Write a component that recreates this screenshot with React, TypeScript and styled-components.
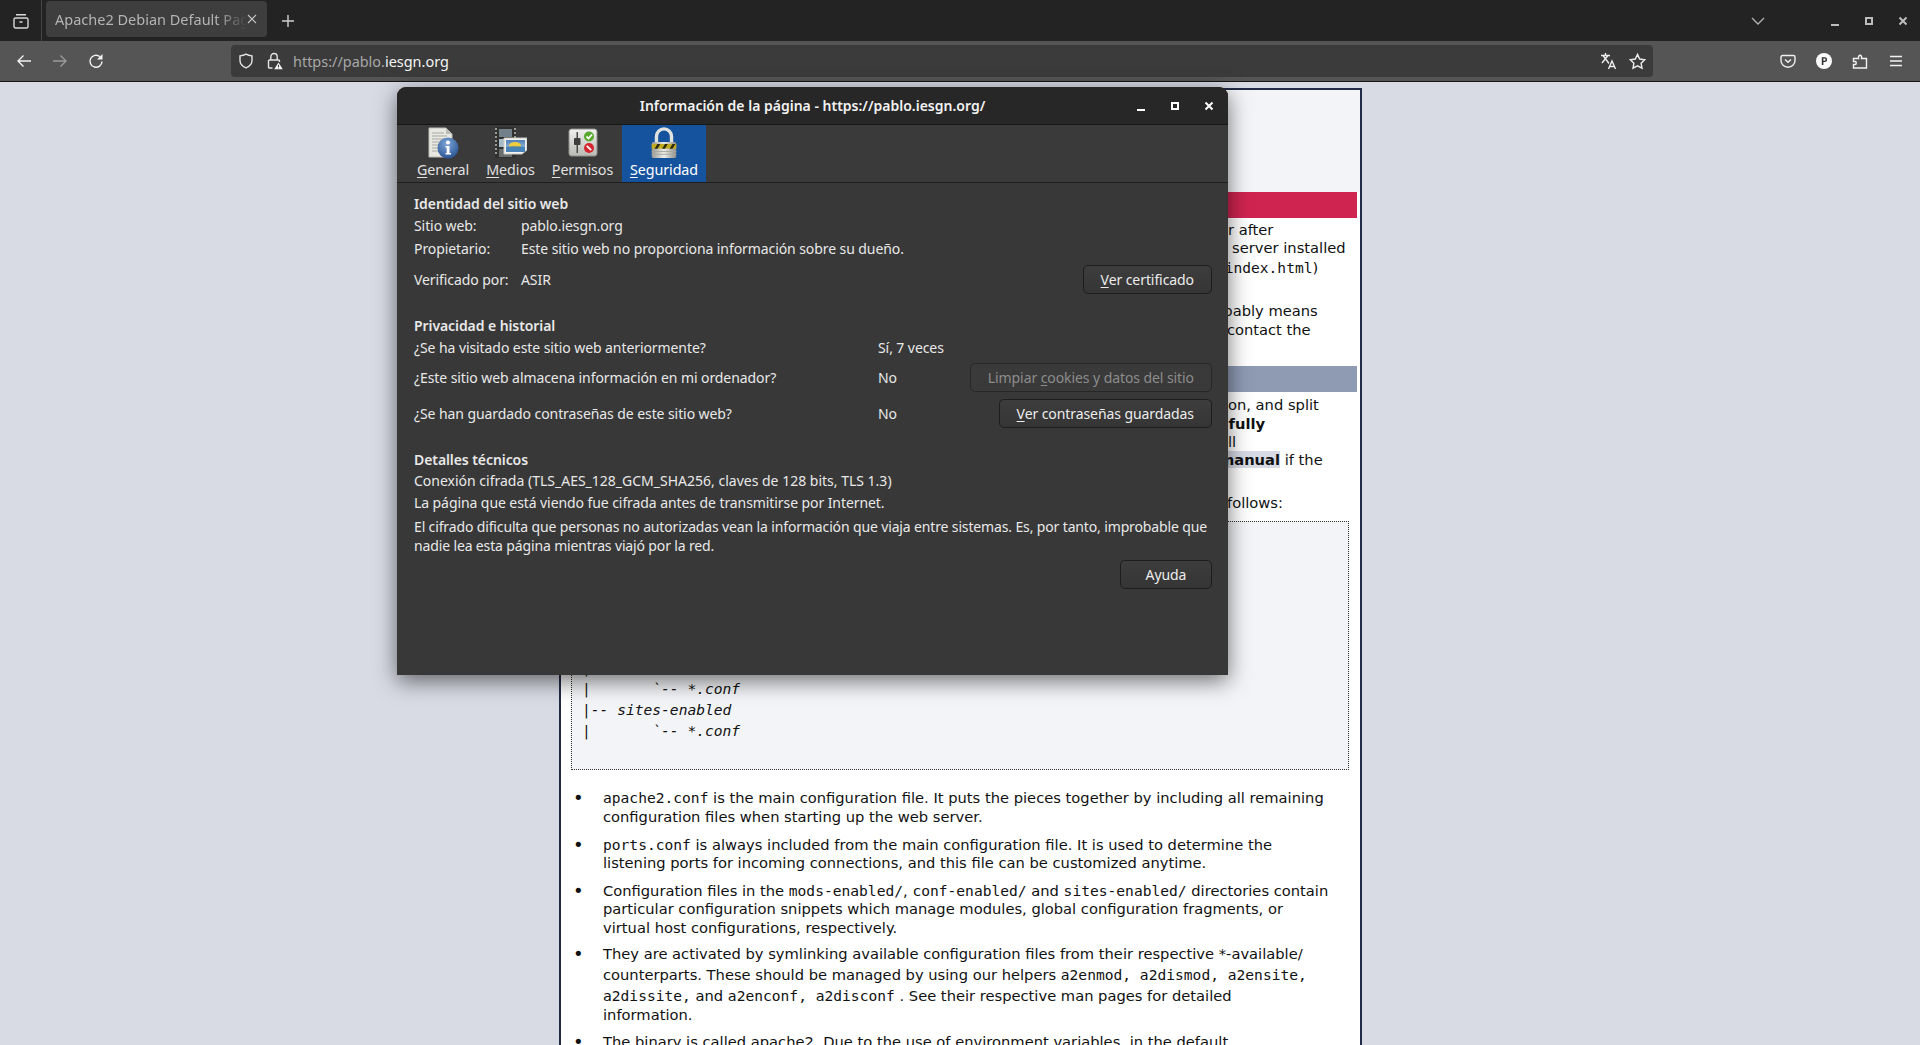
import React from 'react';
import styled, { createGlobalStyle } from 'styled-components';

const GlobalStyle = createGlobalStyle`
  html, body {
    margin: 0;
    height: 1045px;
    overflow: hidden;
    background: #d8dbe4;
  }
  * { box-sizing: border-box; }
`;

const uiFont = `"Noto Sans", "Open Sans", sans-serif`;

/* ---------- browser chrome ---------- */

const Screen = styled.div`
  position: relative;
  width: 1920px;
  height: 1045px;
  overflow: hidden;
  font-family: ${uiFont};
`;

const TabBar = styled.div`
  display: flex;
  align-items: center;
  height: 41px;
  background: #232323;
  color: #d6d6d6;
`;

const SidebarButton = styled.div`
  display: flex;
  align-items: center;
  justify-content: center;
  width: 42px;
  height: 41px;
  border-right: 1px solid #444;
`;

const Tab = styled.div`
  display: flex;
  align-items: center;
  width: 221px;
  height: 36px;
  margin: 0 0 4px 4px;
  padding: 0 10px 0 9px;
  background: #3e3e3e;
  border-radius: 4px;
  font-size: 14.5px;
  color: #b4b4b4;
`;

const TabTitle = styled.span`
  flex: 1;
  overflow: hidden;
  white-space: nowrap;
  -webkit-mask-image: linear-gradient(to right, #000 84%, transparent 100%);
  mask-image: linear-gradient(to right, #000 84%, transparent 100%);
`;

const TabIconSlot = styled.div<{ $w: number }>`
  display: flex;
  align-items: center;
  justify-content: center;
  width: ${(p) => p.$w}px;
`;

const Spacer = styled.div`
  flex: 1;
`;

const WindowControls = styled.div`
  display: flex;
  align-items: center;
  gap: 24px;
  padding-right: 12px;
`;

const NavBar = styled.div`
  display: flex;
  align-items: center;
  height: 41px;
  padding-left: 6px;
  background: #555;
  border-bottom: 1px solid #141414;
`;

const NavButton = styled.div<{ $w?: number }>`
  display: flex;
  align-items: center;
  justify-content: center;
  width: ${(p) => p.$w ?? 36}px;
  height: 32px;
`;

const UrlBar = styled.div`
  display: flex;
  align-items: center;
  width: 1422px;
  height: 32px;
  margin-left: 117px;
  padding: 0 2px 0 7px;
  background: #3b3b3b;
  border-radius: 4px;
  font-size: 14.45px;
  color: #a8a8a8;
`;

const UrlHost = styled.span`
  color: #f4f4f4;
`;

const LockSlot = styled(NavButton)`
  margin-left: 9px;
`;

const UrlText = styled.div`
  flex: 1;
  margin-left: 6px;
`;

const Toolbar = styled.div`
  display: flex;
  margin-left: 117px;
`;

/* ---------- the web page under the dialog ---------- */

const PageBox = styled.div`
  width: 803px;
  height: 1000px;
  margin: 6px 0 0 559px;
  padding: 0 3px;
  background: #fff;
  border: 2px solid #212b45;
  border-bottom: 0;
  color: #111;
  font-family: "DejaVu Sans", sans-serif;
  font-size: 14.7px;
  line-height: 18.3px;
`;

const PageHeader = styled.div`
  height: 102px;
  margin: 0 -3px;
  background: #f3f4f7;
`;

const Banner = styled.div<{ $color: string }>`
  height: 26px;
  background: ${(p) => p.$color};
`;

const Section = styled.div<{ $top?: number; $gapAfter?: number }>`
  padding: ${(p) => p.$top ?? 3}px 8px 0 7px;
  margin-bottom: ${(p) => p.$gapAfter ?? 0}px;
`;

const Para = styled.p<{ $after?: number }>`
  margin: 0 0 ${(p) => p.$after ?? 7}px;
  white-space: nowrap;
`;

const Code = styled.code`
  font-family: "DejaVu Sans Mono", monospace;
  font-size: 14.6px;
  line-height: 19.5px;
`;

const Marked = styled.span`
  background: #d8dbe6;
  font-weight: bold;
`;

const PreBlock = styled.pre`
  height: 249px;
  margin: 0 0 18px;
  padding: 9px 11px 9px 10px;
  background: #f3f4f7;
  border: 1px dotted #333;
  font-family: "DejaVu Sans Mono", monospace;
  font-style: italic;
  font-size: 14.6px;
  line-height: 21px;
`;

const Bullets = styled.ul`
  margin: 0;
  padding: 0 0 0 32px;
  list-style: none;
`;

const Bullet = styled.li`
  margin-bottom: 8.5px;
  white-space: nowrap;

  &::before {
    content: '•';
    display: inline-block;
    width: 30px;
    margin-left: -30px;
    font-size: 18px;
    line-height: 0;
    vertical-align: -1px;
  }
`;

const HelperCode = styled(Code)`
  line-height: 21px;
`;

/* ---------- page info dialog ---------- */

const Dialog = styled.div`
  position: absolute;
  left: 397px;
  top: 87px;
  width: 831px;
  height: 588px;
  display: flex;
  flex-direction: column;
  background: #383838;
  border-radius: 9px 9px 0 0;
  box-shadow: 0 6px 22px rgba(0, 0, 0, 0.55);
  color: #e8e8e8;
  font-size: 14px;
  letter-spacing: -0.08px;
  overflow: hidden;
`;

const TitleBar = styled.div`
  position: relative;
  display: flex;
  align-items: center;
  justify-content: center;
  flex: none;
  height: 38px;
  background: #272727;
  border-bottom: 1px solid #161616;
  font-weight: 600;
  letter-spacing: 0;
  color: #f2f2f2;
`;

const TitleControls = styled.div`
  position: absolute;
  right: 14px;
  top: 14px;
  display: flex;
  align-items: center;
  gap: 24px;
`;

const TabStrip = styled.div`
  display: flex;
  flex: none;
  height: 58px;
  padding-left: 11px;
  background: #3a3a3a;
  border-bottom: 1px solid #1f1f1f;
`;

const PageTab = styled.div<{ $active?: boolean; $w: number }>`
  display: flex;
  flex-direction: column;
  align-items: center;
  width: ${(p) => p.$w}px;
  padding-top: 2px;
  background: ${(p) => (p.$active ? '#15539e' : 'transparent')};
  color: ${(p) => (p.$active ? '#fff' : '#e0e0e0')};
  font-size: 14.3px;
  line-height: 22px;
`;

const Mnemonic = styled.u`
  text-underline-offset: 2px;
`;

const DialogBody = styled.div`
  flex: 1;
  padding: 11px 16px 0 17px;
`;

const GroupTitle = styled.div<{ $top?: number }>`
  margin-top: ${(p) => p.$top ?? 0}px;
  font-weight: 600;
  line-height: 20px;
`;

const InfoRow = styled.div<{ $h: number }>`
  display: flex;
  align-items: center;
  height: ${(p) => p.$h}px;
`;

const InfoLabel = styled.div`
  width: 107px;
  flex: none;
`;

const QuestionLabel = styled.div`
  width: 464px;
  flex: none;
`;

const PushRight = styled.div`
  flex: 1;
`;

const DialogButton = styled.button<{ $disabled?: boolean }>`
  height: 29px;
  padding: 0 17px;
  background: ${(p) => (p.$disabled ? '#3a3a3a' : 'linear-gradient(#3d3d3d, #353535)')};
  border: 1px solid ${(p) => (p.$disabled ? '#272727' : '#1d1d1d')};
  border-radius: 5px;
  color: ${(p) => (p.$disabled ? '#8c8c8c' : '#ececec')};
  font: inherit;
  letter-spacing: inherit;
`;

const TextLine = styled.div<{ $plain?: boolean }>`
  line-height: 22px;
  letter-spacing: ${(p) => (p.$plain ? '0' : 'inherit')};
`;

const Wrapped = styled.div`
  margin-top: 4px;
  line-height: 18.5px;
  letter-spacing: -0.14px;
`;

const HelpRow = styled.div`
  display: flex;
  justify-content: flex-end;
  margin-top: 5px;
`;

const HelpButton = styled(DialogButton)`
  width: 92px;
`;

/* ---------- drawings ---------- */

const stroke = { fill: 'none', stroke: 'currentColor', strokeWidth: 1.4 } as const;

const SidebarIcon = () => (
  <svg width="16" height="16" viewBox="0 0 16 16" {...stroke} color="#d8d8d8">
    <rect x="1" y="5" width="14" height="10" rx="1.5" />
    <path d="M3 1.700h10M6.500 9h3" />
  </svg>
);
const CloseSmall = () => (
  <svg width="10" height="10" viewBox="0 0 10 10" {...stroke} strokeWidth="1.1" color="#c4c4c4">
    <path d="M1 1l8 8M9 1l-8 8" />
  </svg>
);
const Plus = () => (
  <svg width="14" height="14" viewBox="0 0 14 14" {...stroke} color="#d0d0d0">
    <path d="M7 1v12M1 7h12" />
  </svg>
);
const Chevron = () => (
  <svg width="14" height="10" viewBox="0 0 14 10" {...stroke} color="#b0b0b0">
    <path d="M1 2l6 6 6-6" />
  </svg>
);
const Back = () => (
  <svg width="16" height="16" viewBox="0 0 16 16" {...stroke} color="#f4f4f4">
    <path d="M15 8H2M7.500 2.500L2 8l5.500 5.500" />
  </svg>
);
const Forward = () => (
  <svg width="16" height="16" viewBox="0 0 16 16" {...stroke} color="#9a9a9a">
    <path d="M1 8H14M8.500 2.500L14 8l-5.500 5.500" />
  </svg>
);
const Reload = () => (
  <svg width="16" height="16" viewBox="0 0 16 16" {...stroke} color="#f4f4f4">
    <path d="M14 8.500a6 6 0 1 1-2.200-4.900" />
    <path d="M14.500 1v5.500H9z" fill="#f4f4f4" stroke="none" />
  </svg>
);
const Shield = () => (
  <svg width="16" height="16" viewBox="0 0 16 16" {...stroke} color="#e4e4e4">
    <path d="M8 1.200c1.800 1 3.800 1.500 6 1.700v4.600c0 3.600-2.800 6-6 7.300-3.200-1.300-6-3.700-6-7.300V2.900c2.200-.2 4.200-.7 6-1.700z" />
  </svg>
);
const LockWarn = () => (
  <svg width="16" height="18" viewBox="0 0 16 18" {...stroke} color="#e4e4e4">
    <path d="M3.800 8V4.700a3.200 3.200 0 0 1 6.400 0V8" />
    <path d="M5.500 16H2.500a1 1 0 0 1-1-1V9a1 1 0 0 1 1-1h9a1 1 0 0 1 1 1v1" />
    <path d="M11.500 10.500l4.300 6.800H7.200z" fill="#f4f4f4" stroke="none" />
    <path d="M11.500 12.800v2.200M11.500 15.700v.7" stroke="#3b3b3b" strokeWidth="1" />
  </svg>
);
const Translate = () => (
  <svg width="18" height="18" viewBox="0 0 18 18" {...stroke} color="#ececec">
    <path d="M1 3.500h9M5.500 1v2.500M8 3.500L2 11M3 3.500l6 8" />
    <path d="M8.500 17l3.500-8 3.500 8M9.700 14.500h4.600" />
  </svg>
);
const Star = () => (
  <svg width="17" height="17" viewBox="0 0 17 17" {...stroke} color="#ececec">
    <path d="M8.500 1.400l2.200 4.600 5 .7-3.600 3.500.9 5-4.500-2.400L4 15.200l.9-5L1.300 6.700l5-.7z" />
  </svg>
);
const Pocket = () => (
  <svg width="16" height="16" viewBox="0 0 16 16" {...stroke} color="#f2f2f2">
    <path d="M2.500 2.500h11A1.500 1.500 0 0 1 15 4v3.500a7 6.700 0 0 1-14 0V4a1.500 1.500 0 0 1 1.500-1.500z" />
    <path d="M5 6.500L8 9.300l3-2.800" />
  </svg>
);
const Avatar = () => (
  <svg width="16" height="16" viewBox="0 0 16 16">
    <circle cx="8" cy="8" r="8" fill="#fbfbfb" />
    <path d="M5.800 12V4.200h2.900a2.400 2.400 0 0 1 0 4.900H7.400V12zM7.400 5.600v2.100h1.100a1 1 0 0 0 0-2.100z" fill="#333" />
  </svg>
);
const Puzzle = () => (
  <svg width="16" height="16" viewBox="0 0 16 16" {...stroke} color="#f2f2f2">
    <path d="M1.500 15v-3.500h1.700c1.400 0 1.400-3 0-3H1.500V5.500H6.500c-.8-4.300 4-4.300 3 0H14.500V15z" />
  </svg>
);
const Burger = () => (
  <svg width="14" height="14" viewBox="0 0 14 14" {...stroke} color="#f2f2f2">
    <path d="M1 2.500h12M1 7h12M1 11.500h12" />
  </svg>
);
const MinGlyph = ({ light }: { light?: boolean }) => (
  <svg width="10" height="10" viewBox="0 0 10 10">
    <rect x="1" y="8" width="8" height="2" fill={light ? '#fff' : '#bdbdbd'} />
  </svg>
);
const MaxGlyph = ({ light }: { light?: boolean }) => (
  <svg width="10" height="10" viewBox="0 0 10 10" fill="none">
    <rect x="2" y="2" width="6" height="6" stroke={light ? '#fff' : '#bdbdbd'} strokeWidth="2" />
  </svg>
);
const CloseGlyph = ({ light }: { light?: boolean }) => (
  <svg width="10" height="10" viewBox="0 0 10 10" fill="none">
    <path d="M1.500 1.500l7 7M8.500 1.500l-7 7" stroke={light ? '#fff' : '#bdbdbd'} strokeWidth="2" />
  </svg>
);

const GeneralIcon = () => (
  <svg width="32" height="32" viewBox="0 0 32 32">
    <defs>
      <radialGradient id="infoBall" cx="45%" cy="30%" r="75%">
        <stop offset="0" stopColor="#7fa6d8" />
        <stop offset="1" stopColor="#24508f" />
      </radialGradient>
    </defs>
    <path d="M2 1h17l6 6v23H2z" fill="#e8e8e3" stroke="#bdbdb6" />
    <path d="M5 6h12M5 9h15M5 12h15M5 15h13M5 18h11M5 21h11M5 24h12" stroke="#a9a9a3" strokeWidth="1" />
    <path d="M19 1v6h6z" fill="#bcbcb6" />
    <circle cx="21" cy="21" r="10.500" fill="url(#infoBall)" />
    <circle cx="21" cy="15.500" r="2" fill="#fff" />
    <path d="M18.500 19h4v7h1.500v1.500h-5.500V26h1.200v-5.500h-1.200z" fill="#fff" />
  </svg>
);

const MediaIcon = () => (
  <svg width="32" height="32" viewBox="0 0 32 32">
    <defs>
      <linearGradient id="sky" x1="0" x2="0" y1="0" y2="1">
        <stop offset="0" stopColor="#4f7fb8" />
        <stop offset="1" stopColor="#b8cfe4" />
      </linearGradient>
    </defs>
    <rect x="0" y="0" width="21" height="31" fill="#2f2f2d" opacity="0.85" />
    <rect x="4" y="2" width="13" height="8" fill="#72808a" />
    <rect x="4" y="12" width="13" height="8" fill="#a7bcc9" />
    <rect x="4" y="22" width="13" height="8" fill="#686f6e" />
    <path d="M0 2h2M0 6h2M0 10h2M0 14h2M0 18h2M0 22h2M0 26h2M19 2h2M19 6h2M19 10h2M19 14h2M19 18h2M19 22h2M19 26h2" stroke="#9b9b95" strokeWidth="2" />
    <path d="M9 11h23v12l-5 4H9z" fill="#f3f3f0" stroke="#c9c9c4" />
    <rect x="11" y="13" width="19" height="12" fill="url(#sky)" />
    <ellipse cx="20" cy="18.500" rx="6" ry="3.500" fill="#f0cd3c" />
    <path d="M11 20c6-1 13-1 19 0v5H11z" fill="#3e7cb5" opacity="0.9" />
  </svg>
);

const PermissionsIcon = () => (
  <svg width="32" height="32" viewBox="0 0 32 32">
    <defs>
      <linearGradient id="panel" x1="0" x2="0" y1="0" y2="1">
        <stop offset="0" stopColor="#f0f0ee" />
        <stop offset="1" stopColor="#b9b9b4" />
      </linearGradient>
    </defs>
    <rect x="2" y="2" width="28" height="27" rx="2.500" fill="url(#panel)" stroke="#8f8f8a" />
    <rect x="9.500" y="5" width="1.500" height="21" fill="#4a4a48" />
    <rect x="7" y="11" width="6.500" height="7" rx="1" fill="#3e3e3c" />
    <circle cx="22" cy="9.500" r="5" fill="#58a82e" />
    <path d="M19.500 9.500l2 2 3.500-4" fill="none" stroke="#fff" strokeWidth="1.800" />
    <circle cx="22" cy="21" r="5" fill="#d5252f" />
    <path d="M19.800 18.800l4.400 4.400" stroke="#fff" strokeWidth="1.800" />
  </svg>
);

const LockIcon = () => (
  <svg width="32" height="32" viewBox="0 0 32 34">
    <defs>
      <linearGradient id="lockBody" x1="0" x2="1" y1="0" y2="0">
        <stop offset="0" stopColor="#9a9a94" />
        <stop offset="0.5" stopColor="#eeeeea" />
        <stop offset="1" stopColor="#8e8e88" />
      </linearGradient>
    </defs>
    <path d="M8 17V10a8 8 0 0 1 16 0v7" fill="none" stroke="#e2e2de" strokeWidth="3.600" />
    <rect x="3" y="16" width="26" height="17" rx="2" fill="url(#lockBody)" />
    <rect x="3" y="18" width="26" height="5" fill="#c0aa20" />
    <path d="M6 23l3-5h3l-3 5zM14 23l3-5h3l-3 5zM22 23l3-5h3l-3 5z" fill="#2c2a10" />
    <path d="M3 26h26M3 29h26" stroke="#a8a8a2" strokeWidth="1" />
  </svg>
);

const App: React.FC = () => (
  <Screen>
    <GlobalStyle />
    <TabBar>
      <SidebarButton>
        <SidebarIcon />
      </SidebarButton>
      <Tab>
        <TabTitle>Apache2 Debian Default Page</TabTitle>
        <CloseSmall />
      </Tab>
      <TabIconSlot $w={42}>
        <Plus />
      </TabIconSlot>
      <Spacer />
      <TabIconSlot $w={40}>
        <Chevron />
      </TabIconSlot>
      <TabIconSlot $w={52} />
      <WindowControls>
        <MinGlyph />
        <MaxGlyph />
        <CloseGlyph />
      </WindowControls>
    </TabBar>
    <NavBar>
      <NavButton>
        <Back />
      </NavButton>
      <NavButton>
        <Forward />
      </NavButton>
      <NavButton>
        <Reload />
      </NavButton>
      <UrlBar>
        <Shield />
        <LockSlot $w={24}>
          <LockWarn />
        </LockSlot>
        <UrlText>
          https://pablo.<UrlHost>iesgn.org</UrlHost>
        </UrlText>
        <NavButton $w={28}>
          <Translate />
        </NavButton>
        <NavButton $w={28}>
          <Star />
        </NavButton>
      </UrlBar>
      <Toolbar>
        <NavButton>
          <Pocket />
        </NavButton>
        <NavButton>
          <Avatar />
        </NavButton>
        <NavButton>
          <Puzzle />
        </NavButton>
        <NavButton>
          <Burger />
        </NavButton>
      </Toolbar>
    </NavBar>

    <PageBox>
      <PageHeader />
      <Banner $color="#cf2450" />
      <Section $gapAfter={9}>
        <Para>
          This is the default welcome page used to test the correct operation of the Apache2 server after
          <br />
          installation on Debian systems. If you can read this page, it means that the Apache HTTP server installed
          <br />
          at this site is working properly. You should <b>replace this file</b> (located at <Code>/var/www/html/index.html</Code>)
          <br />
          before continuing to operate your HTTP server.
        </Para>
        <Para>
          If you are a normal user of this web site and don't know what this page is about, this probably means
          <br />
          that the site is currently unavailable due to maintenance. If the problem persists, please contact the
          <br />
          site's administrator.
        </Para>
      </Section>
      <Banner $color="#8e9bb3" />
      <Section $top={4}>
        <Para $after={5}>
          Debian's Apache2 default configuration is different from the upstream default configuration, and split
          <br />
          into several files optimized for interaction with Debian tools. The configuration system is <b>fully</b>
          <br />
          <b>documented in /usr/share/doc/apache2/README.Debian.gz</b>. Refer to this for the full
          <br />
          documentation. Documentation for the web server itself can be found by accessing the <Marked>manual</Marked> if the
          <br />
          <Code>apache2-doc</Code> package was installed on this server.
        </Para>
        <Para $after={9}>
          The configuration layout for an Apache2 web server installation on Debian systems is as follows:
        </Para>
        <PreBlock>{`/etc/apache2/
|-- apache2.conf
|       \`--  ports.conf
|-- mods-enabled
|       |-- *.load
|       \`-- *.conf
|-- conf-enabled
|       \`-- *.conf
|-- sites-enabled
|       \`-- *.conf
`}</PreBlock>
        <Bullets>
          <Bullet>
            <Code>apache2.conf</Code> is the main configuration file. It puts the pieces together by including all remaining
            <br />
            configuration files when starting up the web server.
          </Bullet>
          <Bullet>
            <Code>ports.conf</Code> is always included from the main configuration file. It is used to determine the
            <br />
            listening ports for incoming connections, and this file can be customized anytime.
          </Bullet>
          <Bullet>
            Configuration files in the <Code>mods-enabled/</Code>, <Code>conf-enabled/</Code> and <Code>sites-enabled/</Code> directories contain
            <br />
            particular configuration snippets which manage modules, global configuration fragments, or
            <br />
            virtual host configurations, respectively.
          </Bullet>
          <Bullet>
            They are activated by symlinking available configuration files from their respective *-available/
            <br />
            counterparts. These should be managed by using our helpers <HelperCode>a2enmod, a2dismod, a2ensite,</HelperCode>
            <br />
            <HelperCode>a2dissite,</HelperCode> and <HelperCode>a2enconf, a2disconf</HelperCode> . See their respective man pages for detailed
            <br />
            information.
          </Bullet>
          <Bullet>The binary is called apache2. Due to the use of environment variables, in the default</Bullet>
        </Bullets>
      </Section>
    </PageBox>

    <Dialog>
      <TitleBar>
        Información de la página - https://pablo.iesgn.org/
        <TitleControls>
          <MinGlyph light />
          <MaxGlyph light />
          <CloseGlyph light />
        </TitleControls>
      </TitleBar>
      <TabStrip>
        <PageTab $w={70}>
          <GeneralIcon />
          <span>
            <Mnemonic>G</Mnemonic>eneral
          </span>
        </PageTab>
        <PageTab $w={65}>
          <MediaIcon />
          <span>
            <Mnemonic>M</Mnemonic>edios
          </span>
        </PageTab>
        <PageTab $w={79}>
          <PermissionsIcon />
          <span>
            <Mnemonic>P</Mnemonic>ermisos
          </span>
        </PageTab>
        <PageTab $w={84} $active>
          <LockIcon />
          <span>
            <Mnemonic>S</Mnemonic>eguridad
          </span>
        </PageTab>
      </TabStrip>
      <DialogBody>
        <GroupTitle>Identidad del sitio web</GroupTitle>
        <InfoRow $h={23}>
          <InfoLabel>Sitio web:</InfoLabel>
          pablo.iesgn.org
        </InfoRow>
        <InfoRow $h={23}>
          <InfoLabel>Propietario:</InfoLabel>
          Este sitio web no proporciona información sobre su dueño.
        </InfoRow>
        <InfoRow $h={38}>
          <InfoLabel>Verificado por:</InfoLabel>
          ASIR
          <PushRight />
          <DialogButton>
            <Mnemonic>V</Mnemonic>er certificado
          </DialogButton>
        </InfoRow>
        <GroupTitle $top={18}>Privacidad e historial</GroupTitle>
        <InfoRow $h={23}>
          <QuestionLabel>¿Se ha visitado este sitio web anteriormente?</QuestionLabel>
          Sí, 7 veces
        </InfoRow>
        <InfoRow $h={36}>
          <QuestionLabel>¿Este sitio web almacena información en mi ordenador?</QuestionLabel>
          No
          <PushRight />
          <DialogButton $disabled>
            Limpiar <Mnemonic>c</Mnemonic>ookies y datos del sitio
          </DialogButton>
        </InfoRow>
        <InfoRow $h={37}>
          <QuestionLabel>¿Se han guardado contraseñas de este sitio web?</QuestionLabel>
          No
          <PushRight />
          <DialogButton>
            <Mnemonic>V</Mnemonic>er contraseñas guardadas
          </DialogButton>
        </InfoRow>
        <GroupTitle $top={18}>Detalles técnicos</GroupTitle>
        <TextLine $plain>Conexión cifrada (TLS_AES_128_GCM_SHA256, claves de 128 bits, TLS 1.3)</TextLine>
        <TextLine>La página que está viendo fue cifrada antes de transmitirse por Internet.</TextLine>
        <Wrapped>
          El cifrado dificulta que personas no autorizadas vean la información que viaja entre sistemas. Es, por tanto, improbable que nadie lea esta página mientras viajó por la red.
        </Wrapped>
        <HelpRow>
          <HelpButton>Ayuda</HelpButton>
        </HelpRow>
      </DialogBody>
    </Dialog>
  </Screen>
);

export default App;
